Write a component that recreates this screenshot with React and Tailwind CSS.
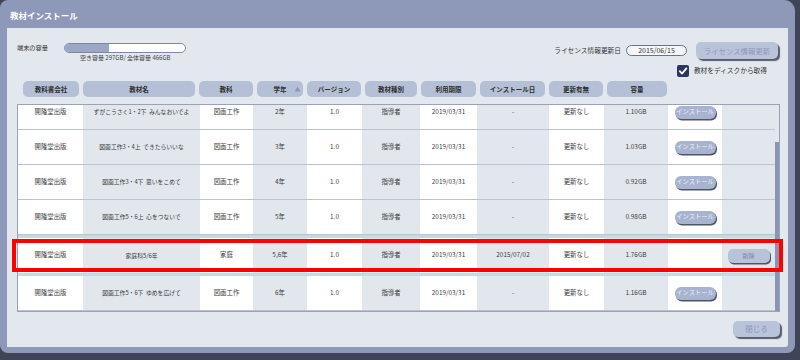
import React from 'react';

const COLS = [
  'w-[65px] bg-white',
  'w-[117px] bg-[#e2e7ee]',
  'w-[53px] bg-white',
  'w-[54px] bg-[#e2e7ee]',
  'w-[55px] bg-white',
  'w-[58px] bg-[#e2e7ee]',
  'w-[57px] bg-white',
  'w-[72px] bg-[#e2e7ee]',
  'w-[55px] bg-white',
  'w-[64px] bg-[#e2e7ee]',
  'w-[54px] bg-white',
  'w-[53px] bg-[#e2e7ee]',
];

const HEADS = [
  ['教科書会社', 'w-[56px]'],
  ['教材名', 'w-[112px]'],
  ['教科', 'w-[54px]'],
  ['学年', 'w-[46px]'],
  ['バージョン', 'w-[54px]'],
  ['教材種別', 'w-[52px]'],
  ['利用期限', 'w-[55px]'],
  ['インストール日', 'w-[65px]'],
  ['更新有無', 'w-[54px]'],
  ['容量', 'w-[60px]'],
];

const ROWS = [
  { name: 'ずがこうさく1・2下\u00a0\u00a0みんなおいでよ', subj: '図画工作', grade: '2年', inst: '-', size: '1.10GB', install: true },
  { name: '図画工作3・4上\u00a0\u00a0できたらいいな', subj: '図画工作', grade: '3年', inst: '-', size: '1.03GB', install: true },
  { name: '図画工作3・4下\u00a0\u00a0思いをこめて', subj: '図画工作', grade: '4年', inst: '-', size: '0.92GB', install: true },
  { name: '図画工作5・6上\u00a0\u00a0心をつないで', subj: '図画工作', grade: '5年', inst: '-', size: '0.98GB', install: true },
  { name: '家庭科5/6年', subj: '家庭', grade: '5,6年', inst: '2015/07/02', size: '1.76GB', install: false, hl: true },
  { name: '図画工作5・6下\u00a0\u00a0ゆめを広げて', subj: '図画工作', grade: '6年', inst: '-', size: '1.16GB', install: true },
];

function InstallBtn() {
  return (
    <div className="h-[13px] w-[41px] rounded-[6px] bg-[#a8b3cf] shadow-[1px_1.5px_0_#4f5568] flex items-center justify-center text-[6.3px] leading-none text-[#eef1f8] whitespace-nowrap">
      インストール
    </div>
  );
}

function DeleteBtn() {
  return (
    <div className="h-[14px] w-[42px] rounded-[5px] bg-[#b8c2d9] shadow-[1px_1.5px_0_#4f5568] flex items-center justify-center text-[6px] leading-none text-[#7b86a8]">
      削除
    </div>
  );
}

function Row({ r }) {
  const cells = [
    '開隆堂出版',
    r.name,
    r.subj,
    r.grade,
    '1.0',
    '指導者',
    '2019/03/31',
    r.inst,
    '更新なし',
    r.size,
    r.install ? <InstallBtn /> : null,
    r.hl ? <DeleteBtn /> : null,
  ];
  return (
    <div
      className={
        r.hl
          ? 'flex shrink-0 h-[41px] border-y-[3px] border-[#bfdde7]'
          : 'flex shrink-0 h-[35px] border-b border-[#bcc3d0]'
      }
    >
      {cells.map((c, i) => (
        <div
          key={i}
          className={`${COLS[i]} flex items-center justify-center ${i === 1 ? 'text-[5.8px]' : 'text-[6.4px]'} leading-none text-[#3b3b3b] whitespace-nowrap`}
        >
          {c}
        </div>
      ))}
    </div>
  );
}

export default function App() {
  return (
    <div className="relative w-[800px] h-[360px] bg-[#3f4456] overflow-hidden font-['Noto_Sans_CJK_JP',sans-serif]">
      <div className="w-[795px] h-[353px] rounded-[8px] rounded-tr-[11px] bg-[#8e98b8] flex flex-col">
        {/* title */}
        <div className="h-[28px] shrink-0 flex items-center pl-[10px] pt-[2px] text-[8.5px] font-bold text-white leading-none">
          教材インストール
        </div>
        {/* panel */}
        <div className="ml-[7px] w-[781px] h-[319px] bg-[#e3e8ef] rounded-br-[3px] flex flex-col pl-[10px] pr-[8px] pt-[14px]">
          {/* top section */}
          <div className="flex justify-between items-start h-[34px]">
            <div className="flex flex-col pt-[1px]">
              <div className="flex items-center h-[10px]">
                <div className="w-[47px] text-[6.2px] leading-none text-[#333]">端末の容量</div>
                <div className="w-[122px] h-[10px] rounded-full border border-[#7e88a6] bg-white overflow-hidden">
                  <div className="w-[44px] h-full bg-[#9ca7c5]" />
                </div>
              </div>
              <div className="ml-[63px] mt-[2px] text-[6px] leading-none text-[#444] whitespace-nowrap">
                空き容量 297GB/ 全体容量 466GB
              </div>
            </div>
            <div className="flex flex-col items-end mr-[2px]">
              <div className="flex items-center h-[17px]">
                <div className="text-[6.7px] leading-none text-[#333] whitespace-nowrap">ライセンス情報更新日</div>
                <div className="ml-[5px] w-[61px] h-[11px] rounded-full border border-[#6b728a] bg-[#f4f6f9] flex items-center justify-center text-[7px] leading-none text-[#333]">
                  2015/06/15
                </div>
                <div className="ml-[9px] w-[82px] h-[17px] rounded-[5px] bg-[#b9c3da] shadow-[2px_2px_1px_#575c6c] flex items-center justify-center text-[7.4px] leading-none text-[#8c98bc] whitespace-nowrap">
                  ライセンス情報更新
                </div>
              </div>
              <div className="flex items-center mt-[6px] mr-[11px] h-[11px]">
                <div className="w-[12px] h-[12px] rounded-[2px] bg-[#2b3560] flex items-center justify-center">
                  <svg width="10" height="10" viewBox="0 0 10 10">
                    <path d="M1.8 5.2 L4 7.6 L8.4 2.4" fill="none" stroke="white" strokeWidth="1.8" strokeLinecap="round" strokeLinejoin="round" />
                  </svg>
                </div>
                <div className="ml-[5px] text-[6.7px] leading-none text-[#333] whitespace-nowrap">教材をディスクから取得</div>
              </div>
            </div>
          </div>

          {/* header */}
          <div className="flex gap-[4px] ml-[6px] mt-[5px] h-[16px]">
            {HEADS.map(([t, w]) => (
              <div
                key={t}
                className={`${w} relative h-[16px] rounded-[5px] bg-[#b5c0d7] flex items-center justify-center text-[6.5px] font-bold leading-none text-[#2f2f2f] whitespace-nowrap`}
              >
                {t}
                {t === '学年' && (
                  <svg className="absolute right-[2px] top-[5px]" width="7" height="6" viewBox="0 0 7 6">
                    <path d="M3.5 0.5 L6.5 5.5 L0.5 5.5 Z" fill="#8d97b5" />
                  </svg>
                )}
              </div>
            ))}
          </div>

          {/* table */}
          <div className="mt-[7px] w-[763px] h-[208px] border border-[#9aa2b8] flex bg-[#e3e8ef]">
            <div className="w-[757px] h-[206px] overflow-hidden flex flex-col">
              <div className="flex flex-col mt-[-10px]">
                {ROWS.map((r, i) => (
                  <Row key={i} r={r} />
                ))}
              </div>
            </div>
            <div className="w-[4px] h-[206px] flex flex-col">
              <div className="h-[37px]" />
              <div className="flex-1 bg-[#8a94b5]" />
            </div>
          </div>

          {/* close */}
          <div className="flex justify-end mt-[9px]">
            <div className="w-[47px] h-[16px] rounded-[5px] bg-[#b9c3da] shadow-[2px_2px_1px_#575c6c] flex items-center justify-center text-[7.5px] leading-none text-[#8c98bc]">
              閉じる
            </div>
          </div>
        </div>
      </div>

      {/* red annotation box */}
      <div className="absolute left-[12px] top-[239px] w-[771px] h-[33px] border-[4px] border-[#ff0000]" />
    </div>
  );
}
